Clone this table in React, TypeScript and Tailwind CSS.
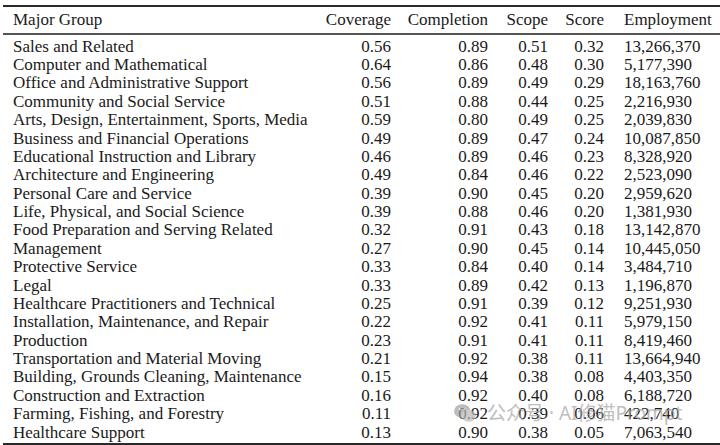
import React from "react";

const rows: [string, string, string, string, string, string][] = [
  ["Sales and Related", "0.56", "0.89", "0.51", "0.32", "13,266,370"],
  ["Computer and Mathematical", "0.64", "0.86", "0.48", "0.30", "5,177,390"],
  ["Office and Administrative Support", "0.56", "0.89", "0.49", "0.29", "18,163,760"],
  ["Community and Social Service", "0.51", "0.88", "0.44", "0.25", "2,216,930"],
  ["Arts, Design, Entertainment, Sports, Media", "0.59", "0.80", "0.49", "0.25", "2,039,830"],
  ["Business and Financial Operations", "0.49", "0.89", "0.47", "0.24", "10,087,850"],
  ["Educational Instruction and Library", "0.46", "0.89", "0.46", "0.23", "8,328,920"],
  ["Architecture and Engineering", "0.49", "0.84", "0.46", "0.22", "2,523,090"],
  ["Personal Care and Service", "0.39", "0.90", "0.45", "0.20", "2,959,620"],
  ["Life, Physical, and Social Science", "0.39", "0.88", "0.46", "0.20", "1,381,930"],
  ["Food Preparation and Serving Related", "0.32", "0.91", "0.43", "0.18", "13,142,870"],
  ["Management", "0.27", "0.90", "0.45", "0.14", "10,445,050"],
  ["Protective Service", "0.33", "0.84", "0.40", "0.14", "3,484,710"],
  ["Legal", "0.33", "0.89", "0.42", "0.13", "1,196,870"],
  ["Healthcare Practitioners and Technical", "0.25", "0.91", "0.39", "0.12", "9,251,930"],
  ["Installation, Maintenance, and Repair", "0.22", "0.92", "0.41", "0.11", "5,979,150"],
  ["Production", "0.23", "0.91", "0.41", "0.11", "8,419,460"],
  ["Transportation and Material Moving", "0.21", "0.92", "0.38", "0.11", "13,664,940"],
  ["Building, Grounds Cleaning, Maintenance", "0.15", "0.94", "0.38", "0.08", "4,403,350"],
  ["Construction and Extraction", "0.16", "0.92", "0.40", "0.08", "6,188,720"],
  ["Farming, Fishing, and Forestry", "0.11", "0.92", "0.39", "0.06", "422,740"],
  ["Healthcare Support", "0.13", "0.90", "0.38", "0.05", "7,063,540"],
];

// column edges taken from the screenshot: text at x=13, numbers right-aligned
const grid = "grid grid-cols-[300px_78px_97px_60px_56px_1fr] pl-[10px]";

function WeChatIcon() {
  return (
    <svg width="24" height="20" viewBox="0 0 26 22">
      <ellipse cx="10" cy="9" rx="9" ry="7.5" fill="#a0a0a0" />
      <ellipse cx="17" cy="14" rx="8" ry="6.5" fill="#b8b8b8" />
      <circle cx="7" cy="7" r="1.1" fill="#fff" />
      <circle cx="12.5" cy="7" r="1.1" fill="#fff" />
    </svg>
  );
}

export default function App() {
  return (
    <div className="relative w-[720px] h-[445px] bg-white text-[#1a1a1a] font-['Liberation_Serif',serif] text-[17px] leading-none overflow-hidden">
      <div className="pt-[5px] pl-[3px]">
        <div className="h-[2px] bg-[#2a2a2a]" />
        <div className={`${grid} h-[26px] items-center pb-[1px]`}>
          <div>Major Group</div>
          <div className="text-right">Coverage</div>
          <div className="text-right">Completion</div>
          <div className="text-right">Scope</div>
          <div className="text-right">Score</div>
          <div className="pl-[20px]">Employment</div>
        </div>
        <div className="h-[1.5px] bg-[#555]" />
        <div className="pt-[2.5px]">
          {rows.map((r) => (
            <div key={r[0]} className={`${grid} h-[18.38px] items-center`}>
              <div className="whitespace-nowrap">{r[0]}</div>
              <div className="text-right">{r[1]}</div>
              <div className="text-right">{r[2]}</div>
              <div className="text-right">{r[3]}</div>
              <div className="text-right">{r[4]}</div>
              <div className="pl-[20px] whitespace-nowrap">{r[5]}</div>
            </div>
          ))}
        </div>
        <div className="mt-[1.5px] h-[2px] bg-[#2a2a2a]" />
      </div>
      <div className="absolute left-[453px] top-[403px] flex items-center gap-[10px] opacity-70 text-[#a5a5a5] font-['Noto_Sans','Noto_Sans_CJK_SC',sans-serif] text-[19px] whitespace-nowrap">
        <WeChatIcon />
        <span>公众号 · AI修猫Prompt</span>
      </div>
    </div>
  );
}
